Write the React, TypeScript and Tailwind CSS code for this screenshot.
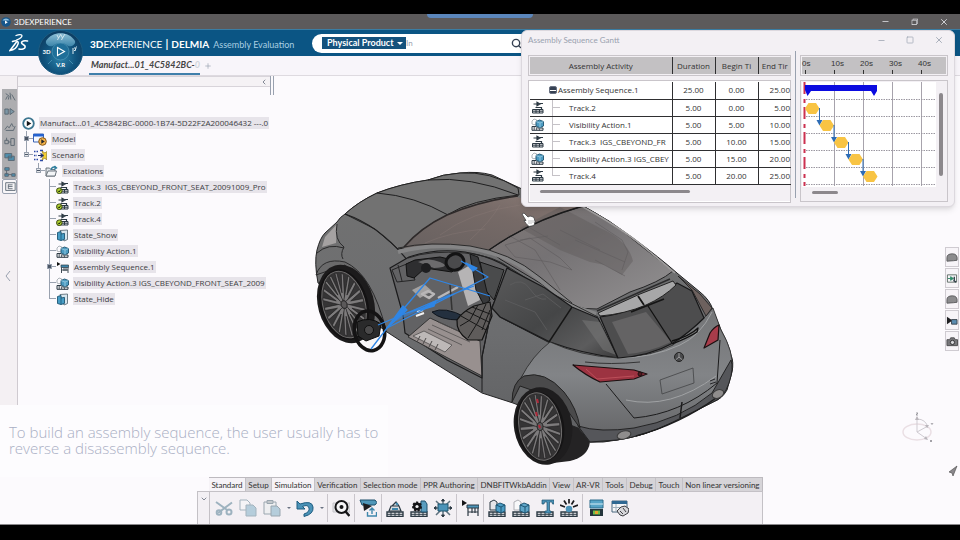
//src/app/App.tsx

import { useState } from "react";
import type { ReactNode } from "react";
import clsx from "clsx";
import { LuChevronDown, LuChevronLeft, LuMinus, LuPlus, LuSearch, LuSquare, LuX } from "react-icons/lu";
import { VscChromeRestore } from "react-icons/vsc";

const INK = "#2d3a44";
const BLUE = "#3f87ac";

/* ---------- small icons ---------- */

function TrackIcon({ badge = false }: { badge?: boolean }) {
  return (
    <svg viewBox="0 0 13 13" className="h-[13px] w-[13px] shrink-0" fill="none" stroke={INK}>
      <path d="M2.500 3h3M6 1.300l3 1.700-3 1.700zM9 2.500h3" strokeWidth="1.200" fill={INK} />
      <path d="M1.500 12V8.500H12V12zM1.500 10.200H12M5 8.500V12M8.500 8.500V12" strokeWidth="1" fill="#e9e9ec" />
      <path d="M4.500 6.500h6v2" strokeWidth="1.200" />
      {badge && <circle cx="3.300" cy="9.700" r="2.800" fill="#b7d733" stroke="#3c4a16" />}
      {badge && <path d="M2 9.700l1.200 1.300 1.500-2.500" stroke="#223009" />}
    </svg>
  );
}

function VisibilityIcon() {
  return (
    <svg viewBox="0 0 13 13" className="h-[13px] w-[13px] shrink-0" fill="none" stroke={INK}>
      <path d="M1 3l2-2 2.500.8v4l-2.500 1L1 6z" stroke="#9aa2a8" strokeWidth=".8" />
      <path d="M1 12.300V8.500h4l1.500 1.500H12v2.300z" fill="#e8e8ea" strokeWidth="1" />
      <path d="M3.200 9v3M5.600 10v2M8.400 10.500v2" strokeWidth=".8" />
      <path d="M5 3.500L8.500 2l4 1.500V8L9 9.800 5 8z" fill="#4d9cc2" stroke="#1e536f" strokeWidth=".9" />
      <path d="M5 3.500L9 5l3.500-1.500M9 5v4.800" stroke="#a9d4e6" strokeWidth=".7" />
    </svg>
  );
}

function StateIcon() {
  return (
    <svg viewBox="0 0 13 13" className="h-[13px] w-[13px] shrink-0">
      <path d="M4 1.500L11.500 1v9.500L8 12z" fill="#d9e6ee" stroke="#51606b" strokeWidth=".8" />
      <path d="M1.500 3.500L5 2.500v2.500l3.500-.6v6L5 11.500l-3.500-1z" fill="#479dc6" stroke="#1d5573" strokeWidth=".9" />
      <path d="M5 5v6.500" stroke="#1d5573" strokeWidth=".8" />
    </svg>
  );
}

function SequenceIcon() {
  return (
    <svg viewBox="0 0 13 13" className="h-[13px] w-[13px] shrink-0">
      <path d="M1 1l3.500 2L1 5z" fill="#111" />
      <path d="M5 4h7.500v2.500H5z" fill={BLUE} stroke={INK} strokeWidth=".7" />
      <path d="M5.500 6.500V12M8 6.500V10M10 6.500V10M12 6.500V12M5.500 9H12" stroke={INK} strokeWidth=".9" />
    </svg>
  );
}

function ModelIcon() {
  return (
    <svg viewBox="0 0 14 13" className="h-[13px] w-[14px] shrink-0">
      <path d="M.5 1h10v8H.5z" fill="#f5f8ff" stroke="#3b62b3" />
      <path d="M.5 1h10v2.500H.5z" fill="#2563d0" />
      <circle cx="9.500" cy="8.500" r="3.800" fill="#f2b24a" stroke="#8a5a18" />
      <path d="M8.300 6.300l3.500 2.200-3.500 2.200z" fill="#23262b" />
    </svg>
  );
}

function ScenarioIcon() {
  return (
    <svg viewBox="0 0 14 13" className="h-[13px] w-[14px] shrink-0" fill="none">
      <path d="M1 2.500h4M1 6.500h3M1 10.500h4" stroke="#2b49a8" strokeWidth="1.300" strokeDasharray="1.500 1" />
      <path d="M7 1.500h3M7 11.500h3" stroke="#2b49a8" strokeWidth="1.300" />
      <path d="M9 2l3 2 1.500-1.500V11L12 9l-3 2 1.500-4.500z" fill="#f4cf35" stroke="#8c7310" strokeWidth=".6" />
      <path d="M5 6.500h4M7.500 4.500l2.500 2-2.500 2" stroke="#1c2c63" strokeWidth="1.200" />
    </svg>
  );
}

function ExcitationIcon() {
  return (
    <svg viewBox="0 0 13 13" className="h-[13px] w-[13px] shrink-0">
      <path d="M1 3h3.500L6 4.500h4V11H1z" fill="#dfe3e8" stroke="#616a73" strokeWidth=".9" />
      <path d="M3 6h8.500L10 11H1z" fill="#f3f5f7" stroke="#616a73" strokeWidth=".9" />
      <path d="M6 5c.5-3 3-3.500 5-2.500M9.500 1l2 1.800-2.500 1.700" fill="none" stroke="#2e7d9d" strokeWidth="1.400" />
    </svg>
  );
}

function PlayIcon() {
  return (
    <svg viewBox="0 0 13 13" className="h-[13px] w-[13px] shrink-0">
      <circle cx="6.500" cy="6.500" r="5.300" fill="#fff" stroke="#3e7690" strokeWidth="1.800" />
      <path d="M4.800 3.700l4.500 2.800-4.500 2.800z" fill="#15181b" />
    </svg>
  );
}

/* ---------- header ---------- */

function DsLogo() {
  return (
    <svg viewBox="0 0 20 20" className="h-5 w-5" fill="none" stroke="#fff" strokeLinecap="round">
      <path d="M7 2.500c3-1.300 6-1.200 6 .2 0 1.500-3 3.300-5.500 4.300" strokeWidth="1.300" />
      <path d="M3.500 8.500c4-1.500 6.500-.5 5.500 2.500-1 3-4 6-8 6.500L7.500 9" strokeWidth="1.500" />
      <path d="M18.500 8c-3-.8-6 0-6 1.800 0 1.600 4 2 3.700 4.200-.3 2-3.500 2.700-6.200 2" strokeWidth="1.600" />
    </svg>
  );
}

function Compass() {
  return (
    <button aria-label="Compass" className="absolute top-[30px] left-[38px] h-[45px] w-[45px]">
      <svg viewBox="0 0 45 45" className="h-full w-full">
        <defs>
          <radialGradient id="compassBase" cx="50%" cy="62%" r="60%">
            <stop offset="0" stopColor="#2c83ab" />
            <stop offset=".6" stopColor="#10537d" />
            <stop offset="1" stopColor="#0d3d62" />
          </radialGradient>
          <linearGradient id="compassTop" x1="0" y1="0" x2="0" y2="1">
            <stop offset="0" stopColor="#8fbfd6" />
            <stop offset="1" stopColor="#3c86ab" />
          </linearGradient>
        </defs>
        <circle cx="22.500" cy="22.500" r="22" fill="url(#compassBase)" stroke="#1c5b80" />
        <path d="M8 11C14 .5 31 .5 37 11c1 4-4 6-7 5-4-4-11-4-15 0-3 1-8-1-7-5z" fill="url(#compassTop)" />
        <circle cx="22.500" cy="21.500" r="8.500" fill="#1f6f99" stroke="#5a9fbe" strokeWidth=".6" />
        <path d="M19.500 17.500l7 4-7 4z" fill="none" stroke="#fff" strokeWidth="1.100" />
        <path d="M14 30l-4 4M31 30l4 4" stroke="#4f97b8" strokeWidth=".8" />
        <path d="M19 5l1.500 3L23 4M19.500 10l1-2M23 5l1.500 3L27 4M23.500 10l1-2" stroke="#dcebf2" strokeWidth=".9" fill="none" />
        <path d="M35 18v6M36 18h2l-1 3-1-1M38 17h1" stroke="#dcebf2" strokeWidth="1" fill="none" />
        <text x="4.500" y="24" fontSize="6" fontWeight="700" fill="#fff" fontFamily="Lato, sans-serif">3D</text>
        <text x="18" y="37" fontSize="6" fontWeight="700" fill="#fff" fontFamily="Lato, sans-serif">V.R</text>
      </svg>
    </button>
  );
}

function TitleBar() {
  return (
    <div className="flex h-[15px] items-center justify-between bg-[#5c5a5b] pr-[11px] pl-px text-white">
      <div className="flex items-center gap-[3px]">
        <svg viewBox="0 0 10 10" className="h-[10px] w-[10px]">
          <circle cx="5" cy="5" r="4.800" fill="#17568a" />
          <path d="M1.500 3.500C3 .8 7 .8 8.500 3.500z" fill="#8cc0e0" />
          <path d="M4 3.500l2.800 1.700L4 7z" fill="#fff" />
        </svg>
        <span className="font-['Lato',sans-serif] text-[8px] leading-none">3DEXPERIENCE</span>
      </div>
      <div className="flex items-center gap-5 text-gray-200">
        <button aria-label="Minimize"><LuMinus size={9} /></button>
        <button aria-label="Restore"><VscChromeRestore size={9} /></button>
        <button aria-label="Close"><LuX size={10} /></button>
      </div>
    </div>
  );
}

function Header() {
  return (
    <header className="flex h-[27px] items-center border-t border-[#3a7da3] bg-[#0b5584] pl-[9px] font-['Lato',sans-serif] text-white">
      <DsLogo />
      <div className="ml-[61px] flex w-[222px] shrink-0 items-baseline whitespace-nowrap">
        <span className="text-[10px] leading-none font-black">3D</span>
        <span className="text-[10px] leading-none font-normal">EXPERIENCE</span>
        <span className="px-[3px] text-[11px] leading-none font-bold">|</span>
        <span className="text-[10px] leading-none font-bold">DELMIA</span>
        <span className="ml-1 text-[9px] leading-none text-[#a9cfe2]">Assembly Evaluation</span>
      </div>
      <div className="flex h-[19px] w-[240px] items-center rounded-full bg-white pl-[10px]">
        <div className="relative flex">
          <select
            aria-label="Search type"
            className="h-3 w-[84px] appearance-none bg-[#15527d] pl-[5px] text-[9px] leading-3 font-bold text-white outline-none"
          >
            <option>Physical Product</option>
          </select>
          <span className="pointer-events-none absolute top-[5px] right-[3px] h-0 w-0 border-x-[3px] border-t-[3px] border-x-transparent border-t-white" />
        </div>
        <input aria-label="Search" placeholder="In" className="w-[105px] text-[8px] outline-none placeholder:text-gray-400" />
        <button aria-label="Run search" className="flex items-center text-gray-700">
          <LuSearch size={11} strokeWidth={3} />
        </button>
      </div>
    </header>
  );
}

/* ---------- left side ---------- */

const railIcons: ReactNode[] = [
  <path d="M2 3l4 3-1 4M7 2l1 8M9 4l4 7M2 10l2-4" />,
  <path d="M1 3.500h4v6H1zM7 3v7l5-3.500z" fill="#7d97a6" />,
  <path d="M1 10l3-4 2 2 3-5 2 4M2 11h9l2-5" />,
  <path d="M1 5h4v4H1zM8 3h4v8H8zM3 2v3M5 7h3" />,
  <path d="M1 3h8v5H1zM5 6h7v5H5z" fill="#4f8fae" />,
  <path d="M1 2h5v3H1zM3 5v5M1 9h4v3H1zM5 10h4M9 9h4v3H9z" fill="#4f8fae" />,
  <path d="M2 2h11v9H2zM5 4v5M5 4.500h5M5 6.500h5M5 9h5" />,
];

function SideRail() {
  return (
    <aside className="flex w-[18px] shrink-0 flex-col border-r border-b border-[#cfcad0] bg-[#f4f0f3] pt-[13px] pl-[2px]">
      {railIcons.map((icon, i) => (
        <button
          key={i}
          aria-label={`Panel ${i + 1}`}
          className={clsx(
            "flex h-[15px] w-[15px] items-center justify-center",
            i === railIcons.length - 1 ? "rounded-xs border border-gray-400 bg-[#f8f6f8]" : "bg-[#adadb0]"
          )}
        >
          <svg viewBox="0 0 14 14" className="h-3 w-3" fill="none" stroke="#55626d" strokeWidth="1">{icon}</svg>
        </button>
      ))}
      <button aria-label="Collapse" className="mt-[76px] text-gray-400">
        <svg viewBox="0 0 12 12" className="h-3 w-3" fill="none" stroke="currentColor"><path d="M8 1L4 6l4 5" /></svg>
      </button>
    </aside>
  );
}

type NodeRow = {
  label: string;
  icon: ReactNode;
  level: 0 | 1 | 2 | 3;
  toggle?: "+" | "-";
  last?: boolean;
};

const treeRows: NodeRow[] = [
  { label: "Manufact...01_4C5842BC-0000-1B74-5D22F2A200046432 ---.0", icon: <PlayIcon />, level: 0 },
  { label: "Model", icon: <ModelIcon />, level: 1, toggle: "+" },
  { label: "Scenario", icon: <ScenarioIcon />, level: 1, toggle: "-", last: true },
  { label: "Excitations", icon: <ExcitationIcon />, level: 2, toggle: "-", last: true },
  { label: "Track.3  IGS_CBEYOND_FRONT_SEAT_20091009_Pro", icon: <TrackIcon badge />, level: 3 },
  { label: "Track.2", icon: <TrackIcon badge />, level: 3 },
  { label: "Track.4", icon: <TrackIcon badge />, level: 3 },
  { label: "State_Show", icon: <StateIcon />, level: 3 },
  { label: "Visibility Action.1", icon: <VisibilityIcon />, level: 3 },
  { label: "Assembly Sequence.1", icon: <SequenceIcon />, level: 3, toggle: "+" },
  { label: "Visibility Action.3 IGS_CBEYOND_FRONT_SEAT_2009", icon: <VisibilityIcon />, level: 3 },
  { label: "State_Hide", icon: <StateIcon />, level: 3, last: true },
];

const indents = ["pl-1", "pl-2", "pl-5", "pl-[31px]"];

function TreeRow({ row }: { row: NodeRow }) {
  return (
    <li className={clsx("flex h-4 items-center", indents[row.level])}>
      {row.level > 0 && (
        <div className="relative w-[7px] shrink-0">
          <div className="h-2 border-b border-l border-gray-400" />
          <div className={clsx("h-2 border-gray-400", !row.last && "border-l")} />
          {row.toggle && (
            <button
              aria-label={`Toggle ${row.label}`}
              className="absolute top-[5px] -left-[2px] flex h-[5px] w-[5px] items-center justify-center border border-gray-400 bg-gray-200"
            >
              <span className={clsx("bg-gray-600", row.toggle === "+" ? "h-[3px] w-[3px]" : "h-px w-[3px]")} />
            </button>
          )}
        </div>
      )}
      {row.icon}
      <span className="ml-1 bg-[#e7e4ea] px-px text-[8px] leading-3 whitespace-pre text-[#3c3c42]">{row.label}</span>
    </li>
  );
}

function TreePanel() {
  return (
    <section className="w-[252px] shrink-0 overflow-hidden">
      <div className="flex h-[11px] items-center justify-end border-y border-[#d8d4da] bg-[#f5f2f5] pr-[2px] text-gray-600">
        <LuChevronLeft size={8} />
      </div>
      <ul className="pt-7">
        {treeRows.map((row) => <TreeRow key={row.label} row={row} />)}
      </ul>
    </section>
  );
}

/* ---------- 3D view ---------- */

const spokes = [10, 46, 82, 118, 154, 190, 226, 262, 298, 334];

function Rim() {
  return (
    <g>
      <ellipse rx="21" ry="34" fill="#353435" stroke="#6f6d6d" strokeWidth="1" />
      {spokes.map((a) => (
        <g key={a} transform={`scale(.62 1) rotate(${a})`}>
          <path d="M-2 -4L-6 -32L-3 -32L0 -12L4 -32L7 -31L2 -4z" fill="#7d7b7c" stroke="#1d1c1d" strokeWidth=".7" />
        </g>
      ))}
      <ellipse rx="3" ry="4" fill="#5b595a" stroke="#222" strokeWidth=".8" />
    </g>
  );
}

function Car() {
  return (
    <svg viewBox="310 166 430 304" className="pointer-events-none absolute top-[90px] left-[310px] h-[304px] w-[430px]" fill="none" strokeLinejoin="round">
      <defs>
        <linearGradient id="side" x1="0" y1="0" x2="0" y2="1">
          <stop offset="0" stopColor="#727272" />
          <stop offset=".6" stopColor="#6c6d6f" />
          <stop offset="1" stopColor="#5f6062" />
        </linearGradient>
        <linearGradient id="roofGlass" x1="0" y1="0" x2="1" y2="1">
          <stop offset="0" stopColor="#807876" />
          <stop offset=".4" stopColor="#757274" />
          <stop offset="1" stopColor="#949293" />
        </linearGradient>
        <linearGradient id="windshield" x1="0" y1="1" x2="1" y2="0">
          <stop offset="0" stopColor="#686160" />
          <stop offset=".6" stopColor="#766a67" />
          <stop offset="1" stopColor="#8b7b76" />
        </linearGradient>
        <linearGradient id="sideGlass" x1="0" y1="0" x2="1" y2="1">
          <stop offset="0" stopColor="#5a5a5b" />
          <stop offset=".5" stopColor="#454647" />
          <stop offset=".8" stopColor="#5c5c5d" />
          <stop offset="1" stopColor="#3a3a3b" />
        </linearGradient>
        <linearGradient id="rear" x1="0" y1="0" x2="0" y2="1">
          <stop offset="0" stopColor="#747577" />
          <stop offset=".5" stopColor="#828487" />
          <stop offset="1" stopColor="#626365" />
        </linearGradient>
      </defs>

      {/* rear tyre tread */}
      <path d="M540 392L578 425L590 442Q588 457 570 461L545 464z" fill="#242324" />

      {/* body shell */}
      <path
        d="M318 283Q314 262 317 250Q320 238 325 233L337 222Q340 217 345 214Q358 202 377 193Q400 184 428 180Q443 174 460 173Q478 171 492 175L522 189L583 206Q610 220 633 238Q660 258 677 273L700 292Q710 300 713 310L721 330Q729 345 731 355Q734 362 732 372L727 390Q722 399 713 402L673 422Q645 436 617 440Q603 443 590 442L578 428L513 403L482 393L433 362L387 332L350 300z"
        fill="url(#side)" stroke="#232324" strokeWidth="1"
      />

      {/* hood */}
      <path d="M345 214Q358 202 377 193Q400 184 428 180Q443 174 460 173Q490 171 518 188L519 195Q470 200 447 215Q420 228 404 248L398 249L375 229z" fill="#727272" stroke="#222" />
      <path d="M377 193Q415 196 448 215M428 180Q470 176 518 195" stroke="#1f1f20" />
      <path d="M345 214Q380 226 408 261" stroke="#1f1f20" strokeWidth="1.200" />
      <path d="M325 237L337 224L336 243L322 247z" fill="#a5a2a2" />
      <path d="M337 224Q334 240 344 247Q340 254 343 259M317 253Q328 243 344 248" stroke="#2a2a2b" />

      {/* front arch */}
      <path d="M316 275Q322 257 345 262Q372 274 386 330L375 325L345 265z" fill="#6a6a6b" stroke="#2a2a2b" />

      {/* windshield */}
      <path d="M404 247Q420 228 447 215Q480 200 516 197L540 202L583 206Q530 222 489 250Q450 246 404 248z" fill="url(#windshield)" />
      <path d="M404 247Q420 228 447 215Q480 201 518 196" stroke="#2e2a2a" strokeWidth="1.600" />
      <path d="M440 235Q470 212 520 205M425 243Q450 232 485 229M500 205Q490 222 470 240" stroke="#93817d" strokeWidth=".7" opacity=".4" />

      {/* panoramic roof */}
      <path d="M489 250Q530 221 583 206Q610 220 640 245L673 271Q660 282 630 292L597 309Q585 310 572 305L540 283L500 259z" fill="url(#roofGlass)" stroke="#242425" />
      <path d="M520 228L560 207L600 228Q628 240 633 261L622 275L605 265L590 262L560 250z" fill="#5f5b5c" opacity=".45" />
      <path d="M595 222L622 240L628 252L622 270M505 245L530 238L560 258L572 270L550 262L515 257zM560 230L600 250M595 260L625 276M508 235L535 250L560 290M530 228L560 245M575 240L625 262M520 240L548 236" stroke="#5f5c5e" strokeWidth=".6" />
      <path d="M583 207Q625 230 650 252L675 273" stroke="#a09e9e" strokeWidth="1.600" />
      <path d="M489 250Q530 221 583 206" stroke="#1b1b1c" strokeWidth="1.300" />
      <path d="M597 311L640 292L670 279" stroke="#2b2b2c" strokeWidth="1.500" />

      {/* door opening */}
      <path d="M390 268L409 257Q435 248 465 252Q490 256 509 268L500 290L492 307L482 357L482 378L447 360L405 333L403 315z" fill="#626264" stroke="#1b1b1c" strokeWidth="1.200" />
      <path d="M398 252Q430 243 470 248Q510 254 540 280L572 306L596 314" stroke="#858586" strokeWidth="4" />
      <path d="M398 248Q430 241 470 246Q510 252 540 277L572 303M408 258Q430 250 465 253Q495 256 510 268L545 290L598 317" stroke="#222" strokeWidth=".9" />
      <path d="M392 270L409 263L415 280L397 282zM398 265L402 281" stroke="#252526" />
      <path d="M408 337L430 318L480 341L482 376z" fill="#98908f" stroke="#333" />
      <path d="M413 336L424 331L452 345L445 352zM432 325L470 342M428 329L462 345M438 322L474 338" fill="#bdb8b7" stroke="#514e4e" strokeWidth=".8" />
      <path d="M420 336l-3 6M426 338l-3 6M432 341l-3 6M438 344l-3 6" stroke="#4c4949" />
      <path d="M458 272L472 264L480 300L468 306z" fill="#b6b4b5" />
      <path d="M470 254L478 257L490 300L484 305L476 290z" fill="#38393b" stroke="#161616" />
      <path d="M480 262L504 270L494 300L487 292z" fill="#4a4b4c" stroke="#161616" />
      <path d="M406 264L415 260L440 257L462 262L452 272L425 268L414 278L407 276z" fill="#2e2e30" stroke="#111" />
      <path d="M418 262q10 -5 22 0t-6 6z" fill="#6c6b6d" />
      <path d="M412 290L424 284L432 291L420 298z" fill="#a3a1a1" />
      <path d="M422 294l6-3 6 3-5 4zM438 298L458 287" stroke="#b9b7b8" strokeWidth="2.500" />
      <path d="M450 285L452 310" stroke="#333" strokeWidth="1.500" />
      <ellipse cx="455" cy="262" rx="9" ry="8" stroke="#131314" strokeWidth="3" fill="#4a4a4c" transform="rotate(-20 455 262)" />
      <circle cx="426" cy="268" r="5" fill="#1e1e20" />
      <path d="M432 312Q445 306 465 317L460 320Q440 320 432 312z" fill="#24303f" stroke="#10151c" />

      {/* seat */}
      <path d="M457 320Q462 312 474 306L490 302L492 316L482 340L468 340Q456 332 457 320z" fill="#5f5c5b" stroke="#111" strokeWidth="1.200" />
      <path d="M461 316L486 330M466 311L489 322M472 307L490 314M478 305L470 320L460 326M486 304L478 322L468 338M490 310L482 330" stroke="#171717" strokeWidth="1" />
      <path d="M416 316l8-3M417 312l6-2" stroke="#f2f2f2" strokeWidth="2" />

      {/* side windows */}
      <path d="M507 268L545 288L572 307L598 318L618 358Q580 353 550 342L500 317L492 308z" fill="url(#sideGlass)" stroke="#19191a" strokeWidth="1.200" />
      <path d="M572 307L549 342" stroke="#151515" strokeWidth="1.400" />
      <path d="M582 320L600 322L616 355L603 350z" fill="#747474" opacity=".6" />
      <path d="M510 285q12 -8 20 4t16 10M505 300l30 12l12 18M525 300l18 -6l18 14" stroke="#5e5e5f" strokeWidth=".8" />
      <path d="M492 308L482 357L482 392M500 317L550 343Q540 352 533 360Q526 370 521 378" stroke="#1d1d1e" />

      {/* rear quarter */}
      <path d="M550 342Q580 356 618 358Q650 357 673 345L704 318L713 308L721 330Q734 352 732 370Q726 396 713 402L673 422Q645 436 617 440L590 442L578 426Q572 392 540 376L521 378Q532 356 550 342z" fill="url(#rear)" stroke="#29292a" strokeWidth=".8" />
      <path d="M578 426Q600 433 634 428Q680 420 712 393L731 360Q734 368 729 383Q724 398 713 402L673 422Q645 436 617 440L590 442z" fill="#55565a" stroke="#232324" />
      <path d="M680 418L682 402M636 436Q680 424 716 398" stroke="#1c1c1d" strokeWidth="1.500" />
      <path d="M618 358Q652 358 680 345Q700 336 712 312M626 400Q670 410 716 376" stroke="#a0a2a4" strokeWidth="1" />
      <path d="M606 384L634 418Q680 414 717 383L720 340" stroke="#1c1c1d" />
      <path d="M585 362Q610 365 640 362" stroke="#343435" />

      {/* rear window and spoiler */}
      <path d="M600 317Q640 312 677 283L692 291L704 318Q690 332 673 343Q650 356 618 358z" fill="#4d4d4e" stroke="#171718" strokeWidth="1.200" />
      <path d="M612 322L646 312L671 342Q650 352 628 354z" fill="#646364" />
      <path d="M648 306L672 343M672 341Q690 336 698 328L697 332Q688 338 672 344" stroke="#111" strokeWidth="1.300" />
      <path d="M598 313L640 294L673 281L676 285Q664 297 646 305Q625 314 600 316z" fill="#a7a7a8" stroke="#222" />
      <path d="M638 296L644 305M631 312L664 299" stroke="#151515" strokeWidth="1.800" />
      <path d="M678 276L692 290L706 316L712 308L700 294z" fill="#6d615e" stroke="#1c1c1d" strokeWidth=".8" />

      {/* lamps, badge, plate, exhausts */}
      <path d="M573 365L610 368L634 370L647 374L634 379L600 382Q585 375 573 365z" fill="#9c3341" stroke="#1b1011" strokeWidth="1.200" />
      <path d="M586 369L597 379L634 376" stroke="#c45560" strokeWidth=".8" />
      <circle cx="640" cy="374" r="2" fill="#55181f" stroke="#1b1011" />
      <path d="M704 348L710 333Q714 327 719 325L718 340z" fill="#a83c4a" stroke="#1b1011" strokeWidth="1.200" />
      <circle cx="679" cy="357" r="4.500" fill="#4a4b4d" stroke="#222" />
      <path d="M679 353v4l-3.500 3M679 357l3.500 3" stroke="#9b9b9c" />
      <path d="M660 380L693 368L694 383L662 394z" stroke="#4a4b4d" strokeWidth=".9" />
      <path d="M710 381l5-2M710 384l6-2" stroke="#27272a" />
      <ellipse cx="624" cy="435" rx="7" ry="4" fill="#8f8d8d" stroke="#3a3a3a" transform="rotate(-15 624 435)" />
      <ellipse cx="718" cy="394" rx="6" ry="4" fill="#8f8d8d" stroke="#3a3a3a" transform="rotate(-25 718 394)" />

      {/* rear wheel */}
      <path d="M512 402Q512 382 524 376Q545 370 564 392Q577 408 580 428L560 400L520 386z" fill="#4a4a4b" stroke="#222" />
      <g transform="translate(543 426) rotate(-10)">
        <ellipse rx="29" ry="39" fill="#1e1d1e" />
        <ellipse rx="24" ry="35" cx="-3" fill="#151415" />
        <g transform="translate(-3 0)"><Rim /></g>
      </g>
      <path d="M537 399l1 4M536 412l1 4M539 425l1 3" stroke="#b02a3a" strokeWidth="2" />

      {/* front wheel */}
      <g transform="translate(346 304) rotate(-16)">
        <ellipse rx="28" ry="40" fill="#1c1b1c" />
        <ellipse rx="24" ry="36" cx="-2" fill="#131213" />
        <g transform="translate(-2 0)"><Rim /></g>
      </g>

      {/* steering wheel pulled out of the cabin */}
      <path d="M362 342L380 336L372 350z" fill="#f7f5f7" />
      <ellipse cx="369.500" cy="331" rx="15" ry="20" stroke="#141314" strokeWidth="3.500" transform="rotate(-12 369 331)" />
      <path d="M357 322Q370 316 381 324L379 336L366 341L358 336z" fill="#2a2a2b" stroke="#0d0d0d" />
      <circle cx="369" cy="330" r="4.500" fill="#4b4a4b" stroke="#111" />

      {/* removal tracks */}
      <g stroke="#2f86e6" strokeWidth="1.300">
        <path d="M387 328L430 278L490 296M387 328L488 277L461 261M378 325L433 302L474 286M371 349L387 328M400 315L430 306" />
        <path d="M387 328L403 306L407 310z" fill="#2f86e6" />
        <path d="M420 310L436 301L434 306zM466 263L477 268L473 271z" fill="#2f86e6" />
        <path d="M395 320L450 295" strokeWidth="3" opacity=".5" />
      </g>
    </svg>
  );
}

function AxisGizmo() {
  return (
    <svg viewBox="0 0 36 34" className="absolute top-[336px] right-[23px] h-[34px] w-[36px]" fill="none">
      <ellipse cx="16" cy="20" rx="14" ry="8" stroke="#eadfe4" strokeWidth="1.500" />
      <path d="M16 20V5M16 20l11-6M16 20l10 7M16 7q9 0 11 9" stroke="#cfcbd1" strokeWidth="1" />
      <path d="M16 4l-2 4h4zM28 13l-4 0 2 3zM27 28l-4-1 2-3z" fill="#b9b5bb" />
      <path d="M15 1h2l-2 2h2M30 11l1 1.500 1-1.500M29 28l2 2M31 28l-2 2" stroke="#8c8a90" strokeWidth=".8" />
    </svg>
  );
}

const bubble = <path d="M1 6q0-4 6-4t5 7L8 9.500 1 10z" fill="#8b8b8d" stroke="#5a5a5c" />;

const viewTools: { name: string; icon: ReactNode }[] = [
  { name: "Comment", icon: bubble },
  { name: "Slide", icon: <><path d="M1.500 2h10v8h-10z" stroke="#5c6a64" /><path d="M2 6h3M5 4l3 2-3 2z" stroke="#2e8a68" fill="#2e8a68" /><path d="M9 4v4M8 8l3 2" stroke="#33424b" strokeWidth="1.500" /></> },
  { name: "Reply", icon: bubble },
  { name: "Play markup", icon: <><path d="M1 2l6 4-6 4z" fill="#1f1f22" /><path d="M6 5h6v5H6z" fill="#5a8cb0" stroke="#38424b" /></> },
  { name: "Capture", icon: <><path d="M1 4h3l1-2h4l1 2h2.500v6.500H1z" fill="#77777a" stroke="#4b4b4e" /><circle cx="7" cy="7" r="2.300" fill="#d7d7da" stroke="#2b2b2e" /></> },
];

function ViewTools() {
  return (
    <div className="absolute top-[171px] right-px flex flex-col gap-px">
      {viewTools.map((tool) => (
        <button key={tool.name} aria-label={tool.name} className="flex h-5 w-[14px] items-center justify-center border border-[#cfcbd1] bg-[#f7f4f8]">
          <svg viewBox="0 0 13 12" className="h-[11px] w-3" fill="none">{tool.icon}</svg>
        </button>
      ))}
    </div>
  );
}

/* ---------- gantt window ---------- */

const activities = [
  { name: "Assembly Sequence.1", duration: "25.00", begin: "0.00", end: "25.00" },
  { name: "Track.2", duration: "5.00", begin: "0.00", end: "5.00" },
  { name: "Visibility Action.1", duration: "5.00", begin: "5.00", end: "10.00" },
  { name: "Track.3  IGS_CBEYOND_FR", duration: "5.00", begin: "10.00", end: "15.00" },
  { name: "Visibility Action.3 IGS_CBEY", duration: "5.00", begin: "15.00", end: "20.00" },
  { name: "Track.4", duration: "5.00", begin: "20.00", end: "25.00" },
];

function Columns() {
  return (
    <colgroup>
      <col className="w-[142px]" />
      <col className="w-[43px]" />
      <col className="w-[43px]" />
      <col className="w-[33px]" />
    </colgroup>
  );
}

function ActivityTable() {
  return (
    <div className="w-[263px] text-[8px] text-[#333]">
      <div className="border border-[#c9c5ca] p-px pr-0">
        <table className="w-full table-fixed border-collapse bg-[#c3c1c3] text-center whitespace-nowrap">
          <Columns />
          <thead>
            <tr className="h-[17px]">
              <th className="border-r border-[#2f2f31] p-0 font-normal">Assembly Activity</th>
              <th className="border-r border-[#2f2f31] p-0 font-normal">Duration</th>
              <th className="border-r border-[#2f2f31] p-0 font-normal">Begin Ti</th>
              <th className="p-0 font-normal">End Tir</th>
            </tr>
          </thead>
        </table>
      </div>
      <div className="mt-1 border border-[#c9c5ca] bg-white p-px pr-0">
        <table className="w-full table-fixed border-collapse text-center leading-none whitespace-pre">
          <Columns />
          <tbody>
            {activities.map((a, i) => (
              <tr key={a.name} className="h-[17px] border-b border-[#2f2f31]">
                <td className="border-r border-[#2f2f31] p-0">
                  <div className="flex h-4 items-center">
                    {i === 0 ? (
                      <>
                        <span className="mr-px ml-[19px] flex h-2 w-2 items-center rounded-xs border border-gray-500 bg-gray-700"><span className="h-px w-full bg-white" /></span>
                        <span>{a.name}</span>
                      </>
                    ) : (
                      <>
                        <span className="ml-px">{a.name.startsWith("Track") ? <TrackIcon /> : <VisibilityIcon />}</span>
                        <span className="ml-2 h-4 w-2 shrink-0">
                          <span className="block h-2 border-b border-l border-[#c5c2c7]" />
                          <span className={clsx("block h-2 border-[#c5c2c7]", i < 5 && "border-l")} />
                        </span>
                        <span className="ml-[9px]">{a.name}</span>
                      </>
                    )}
                  </div>
                </td>
                <td className="border-r border-[#2f2f31] p-0">{a.duration}</td>
                <td className="border-r border-[#2f2f31] p-0">{a.begin}</td>
                <td className="p-0 pr-px text-right">{a.end}</td>
              </tr>
            ))}
          </tbody>
        </table>
        <div className="h-4 bg-[#f3f0f4] pt-[5px]">
          <div className="ml-[10px] h-[3px] w-[150px] rounded-full bg-[#8c888c]" />
        </div>
      </div>
    </div>
  );
}

function TimeChart() {
  return (
    <div className="w-[148px]">
      <div className="border border-[#c9c5ca] p-px">
        <div className="flex h-[17px] bg-[#c3c1c3] pl-[3px] font-['Liberation_Sans',sans-serif] text-[8px] leading-none text-[#333]">
          {["0s", "10s", "20s", "30s", "40s"].map((label) => (
            <div key={label} className="w-[29px] shrink-0 pt-[3px]">
              <div className="-ml-[3px]">{label}</div>
              <div className="mt-[2px] h-1 w-px bg-[#333]" />
            </div>
          ))}
        </div>
      </div>
      <div className="mt-1 border border-[#c9c5ca] p-px">
        <div className="flex">
          <svg viewBox="802 80 134 105" className="h-[105px] w-[134px] bg-white" fill="none">
            {[834.5, 863.5, 892.5, 921.5].map((x) => <path key={x} d={`M${x} 80V184`} stroke="#a7a3ac" />)}
            {[0, 1, 2, 3, 4, 5].map((i) => (
              <path key={i} d={`M806 ${97.5 + i * 17}H936`} stroke="#9a97a0" strokeDasharray="1.500 1" />
            ))}
            <path d="M804.500 80V184" stroke="#cc3150" strokeWidth="2" strokeDasharray="12 5 4 4" />
            <path d="M805 83H877V89L874 94L871 89H811L807.500 94L805 88z" fill="#0b0be0" />
            {[0, 1, 2, 3, 4].map((i) => (
              <g key={i} transform={`translate(${i * 14.500} ${i * 17})`}>
                <path d="M805 106.500L808.500 101H816L819.500 106.500L816 112H808.500z" fill="#f8c444" />
                {i < 4 && <path d="M819.500 106V119" stroke="#2d6cb5" />}
                {i < 4 && <path d="M816.500 118H822.500L819.500 123.500z" fill="#2d6cb5" />}
              </g>
            ))}
          </svg>
          <div className="mt-[11px] ml-[3px] h-[83px] w-1 rounded-xs bg-[#8c888c]" />
        </div>
        <div className="h-[13px] pt-1">
          <div className="ml-[10px] h-[3px] w-[26px] rounded-xs bg-[#8c888c]" />
        </div>
      </div>
    </div>
  );
}

function GanttWindow() {
  return (
    <section className="absolute top-[30px] right-[5px] w-[434px] rounded-md border border-[#dcd8de] bg-[#f3f0f4] pb-[3px] pl-[6px] shadow-md">
      <div className="flex h-[18px] items-center justify-between pr-[10px] text-gray-400">
        <h2 className="font-['Lato',sans-serif] text-[8px] leading-none">Assembly Sequence Gantt</h2>
        <div className="flex items-center gap-[20px]">
          <button aria-label="Minimize gantt"><LuMinus size={9} /></button>
          <button aria-label="Maximize gantt"><LuSquare size={8} /></button>
          <button aria-label="Close gantt"><LuX size={10} /></button>
        </div>
      </div>
      <div className="flex items-start pt-[6px]">
        <ActivityTable />
        <div className="mx-1 -mt-1 h-[147px] w-px bg-gray-400" />
        <TimeChart />
      </div>
    </section>
  );
}

/* ---------- bottom action bar ---------- */

const tabs = ["Standard", "Setup", "Simulation", "Verification", "Selection mode", "PPR Authoring", "DNBFITWkbAddin", "View", "AR-VR", "Tools", "Debug", "Touch", "Non linear versioning"];

const film = (
  <g>
    <path d="M1 13h16v4.500H1z" fill="#f1f1f3" stroke={INK} strokeWidth="1.400" />
    <path d="M1 15.300h16M5 13v4M9 13v4M13 13v4" stroke={INK} strokeWidth="1" />
  </g>
);

const tools: (string | { name: string; icon: ReactNode })[] = [
  { name: "Cut", icon: <g stroke="#9db2bf" strokeWidth="2"><path d="M1 3l12 8.500M3 14L17 3.500" /><circle cx="4" cy="13.500" r="2.300" /><circle cx="14" cy="13" r="2.500" /></g> },
  { name: "Copy", icon: <g stroke="#a3b3bd"><path d="M1 1h7l3 3v7H1z" fill="#f4f4f6" /><path d="M7 6h7l3 3v8H7z" fill="#b5cddb" /></g> },
  { name: "Paste", icon: <g stroke="#9aa6af"><path d="M1 3h12v12H1z" fill="#eeeff1" /><path d="M4 1.500h6v3H4z" fill="#c2c7cb" /><path d="M8 7h6l3 3v7H8z" fill="#b5cddb" /></g> },
  "caret",
  { name: "Undo", icon: <path d="M1 2v8h8L6.500 7.500Q12 5 13 9t-5 6v2.500Q18 15 17 8T4 5z" fill="#4b93b8" stroke="#1f5d80" /> },
  "caret",
  "sep",
  { name: "Fit all", icon: <><path d="M1 4h17v9H1z" fill="#e4e4e7" stroke="#c4c4c9" /><circle cx="9.500" cy="8" r="6" stroke="#151517" strokeWidth="2" fill="#f5f5f7" /><circle cx="9.500" cy="8" r="2" fill="#151517" /><path d="M13.500 12.500l4 4.500" stroke="#151517" strokeWidth="2.500" /></> },
  "sep",
  { name: "Fly", icon: <><path d="M1 1h15l2 2.500-2 2.500H3z" fill="#4f97b9" stroke="#1d4f6a" /><path d="M4 4l9 3-8 5z" fill="#1c1d20" /><path d="M8.500 13v4h9v-4M13 15V9M10.500 11.500L13 9l2.500 2.500" stroke="#3f87ac" strokeWidth="1.400" /></> },
  "sep",
  { name: "Track", icon: <>{film}<path d="M3 12l2-5h8l2 5zM6 7l4-4 3 4" fill="#d9dde0" stroke={INK} strokeWidth="1.200" /><path d="M10 4l2 2M6 10h6" stroke={BLUE} strokeWidth="2" /></> },
  { name: "Operation", icon: <>{film}<path d="M11 2h4l2 3v8h-6z" fill="#5a9dbf" stroke="#21536e" /><circle cx="7" cy="7.500" r="4" fill="#151517" stroke="#151517" strokeWidth="2" strokeDasharray="2 1.500" /><circle cx="7" cy="7.500" r="1.600" fill="#f1f1f3" /></> },
  { name: "Explode", icon: <><path d="M9 0v18M0 9h18M2 2l14 14M16 2L2 16" stroke="#5f727f" strokeWidth="1.500" /><path d="M7.500 2h3L9 0zM7.500 16h3L9 18zM2 7.500v3L0 9zM16 7.500v3L18 9z" fill={INK} stroke={INK} /><path d="M4 5h10v7H4z" fill="#4b93b8" stroke="#20566f" /></> },
  "sep",
  { name: "Assembly sequence", icon: <><path d="M1 1l5 3-5 3z" fill="#151517" /><path d="M6 6h12v3H6z" fill="#4b93b8" stroke={INK} /><path d="M7 9v8M11 9v5M14 9v5M17 9v8M7 13h10" stroke={INK} strokeWidth="1.200" /></> },
  "sep",
  { name: "Visibility", icon: <>{film}<path d="M2 3l4-2 3 2v8H2z" fill="#e5e5e8" stroke={INK} /><path d="M8 6l4-2 5 2v6l-4 2-5-2z" fill="#4b9cc4" stroke="#1d5573" /><path d="M8 6l5 2 4-2M13 8v6" stroke="#1d5573" /></> },
  { name: "Hide", icon: <>{film}<path d="M2 3l4-2 3 2v8H2z" fill="#f8f8fa" stroke="#b0b0b6" /><path d="M8 6l4-2 5 2v6l-4 2-5-2z" fill="#5fa6c9" stroke="#1d5573" /><path d="M8 6l5 2 4-2M13 8v6" stroke="#1d5573" /></> },
  { name: "Text", icon: <>{film}<path d="M6 1h12v4h-1.500L16 3h-2.500v9H15v2H9v-2h2V3H8.500L8 5H6z" fill="#4b93b8" stroke="#21536e" strokeWidth=".7" /></> },
  { name: "Highlight", icon: <>{film}<circle cx="9" cy="10" r="3.300" fill="#4b93b8" /><path d="M9 0v4.500M4 1.500l2.500 4M14 1.500l-2.500 4M0 6l5 2M18 6l-5 2" stroke="#1b1b1e" strokeWidth="1.700" /></> },
  "sep",
  { name: "Results", icon: <><path d="M3 1h13v8H3z" fill="#58a4c6" stroke="#2c6d8c" /><path d="M3 5h13" stroke="#d5ebf4" /><path d="M3 10h13v7H3z" fill="#24343b" /><path d="M6 11.500h7v4H6z" fill="#6ac04b" /><path d="M8 12h3v3H8z" fill="#e6a32e" /></> },
  { name: "Report", icon: <><path d="M1 2h15v11H1z" fill="#f6f6f8" stroke="#49667c" /><path d="M1 2h15v3H1z" fill="#2f6892" /><path d="M1 8.500h8M5 5v8" stroke="#9fb0bc" /><path d="M6 12l4-4 4-1 4 3-1 4-5 3-3-1z" fill="#d6d6d9" stroke="#3d3d42" /><path d="M9 12l3 3M12 9l3 4" stroke="#3d3d42" /></> },
];

function ActionBar() {
  const [active, setActive] = useState("Simulation");

  return (
    <div className="ml-[197px] w-[566px]">
      <div className="ml-3 flex h-[14px] border-t border-r border-[#bdbabf] bg-[#d6d4d8] font-['Lato',sans-serif] text-[8px] leading-none text-[#333]">
        {tabs.map((tab) => (
          <button
            key={tab}
            onClick={() => setActive(tab)}
            className={clsx(
              "flex-auto border-r border-[#c4c1c6] px-px whitespace-nowrap last:border-r-0",
              tab === active || tab === "Standard" ? "bg-[#f6f3f7]" : "bg-[#d6d4d8]"
            )}
          >
            {tab}
          </button>
        ))}
      </div>
      <div className="flex h-[33px] border border-b-0 border-[#c4c1c6] bg-[#f3f0f4]">
        <button aria-label="More" className="flex w-3 justify-center border-r border-[#c4c1c6] pt-[3px] text-gray-600">
          <LuChevronDown size={8} />
        </button>
        <div className="flex items-center pl-[2px]">
          {tools.map((tool, i) => {
            if (tool === "sep") return <span key={i} className="mx-px h-7 w-px bg-[#c9c5cb]" />;
            if (typeof tool === "string") {
              return (
                <button key={i} aria-label="More options" className="flex w-[9px] justify-center">
                  <span className="border-x-2 border-t-2 border-x-transparent border-t-gray-500" />
                </button>
              );
            }
            return (
              <button key={i} aria-label={tool.name} className="flex w-6 items-center justify-center">
                <svg viewBox="0 0 18 18" className="h-[18px] w-[18px]" fill="none">{tool.icon}</svg>
              </button>
            );
          })}
        </div>
      </div>
    </div>
  );
}

/* ---------- page ---------- */

export default function App() {
  return (
    <div className="relative flex min-h-screen flex-col overflow-hidden bg-black pt-[14px] pb-[15px] font-['Open_Sans','Noto_Sans',sans-serif]">
      <TitleBar />
      <div className="absolute top-[14px] left-1/2 h-[4px] w-[106px] -translate-x-1/2 rounded-b-sm bg-[#5b86bb]" />
      <Header />

      <nav className="flex h-[20px] items-start border-b border-[#dedae0] bg-[#f8f5fa] pl-[89px] font-['Lato',sans-serif]">
        <a href="#manufact" className="h-[19px] w-[111px] border-b-2 border-[#3f7fab] pl-[2px] text-[9px] leading-[18px] font-bold whitespace-nowrap text-[#444] italic">
          Manufact...01_4C5842BC-<span className="text-gray-300">0</span>
        </a>
        <button aria-label="New tab" className="ml-1 flex h-[19px] items-center text-gray-400"><LuPlus size={8} /></button>
      </nav>

      <main className="flex flex-1 flex-col border-b border-[#8a888b] bg-[#fcfafd]">
        <div className="relative flex flex-1">
          <SideRail />
          <TreePanel />
          <div className="h-[19px] w-1 border-x border-gray-400" />
          <Car />
          <AxisGizmo />
          <ViewTools />
          <svg viewBox="0 0 10 12" className="absolute right-[2px] bottom-0 h-3 w-[10px]">
            <path d="M9 1L1 7l3 1 1 3z" fill="#8b888c" stroke="#444" strokeWidth=".6" />
          </svg>
          <p className="absolute bottom-0 left-0 h-[72px] w-[388px] bg-[#fdfcfe] pt-[19px] pl-[9px] text-[15px] leading-4 font-light text-[#a9afc4]">
            To build an assembly sequence, the user usually has to reverse a disassembly sequence.
          </p>
        </div>
        <ActionBar />
      </main>

      <Compass />
      <GanttWindow />

      <svg viewBox="0 0 16 16" className="absolute top-[212px] left-[521px] h-4 w-4">
        <path d="M1 2l2-1 4 4 2-1 2 .5 2 1 1 4-1 4-5 1-3-3-2-3 2 0z" fill="#fff" stroke="#444" strokeWidth=".8" />
        <path d="M8 8v4M10 8v4M12 8v3" stroke="#999" strokeWidth=".6" />
      </svg>
    </div>
  );
}
